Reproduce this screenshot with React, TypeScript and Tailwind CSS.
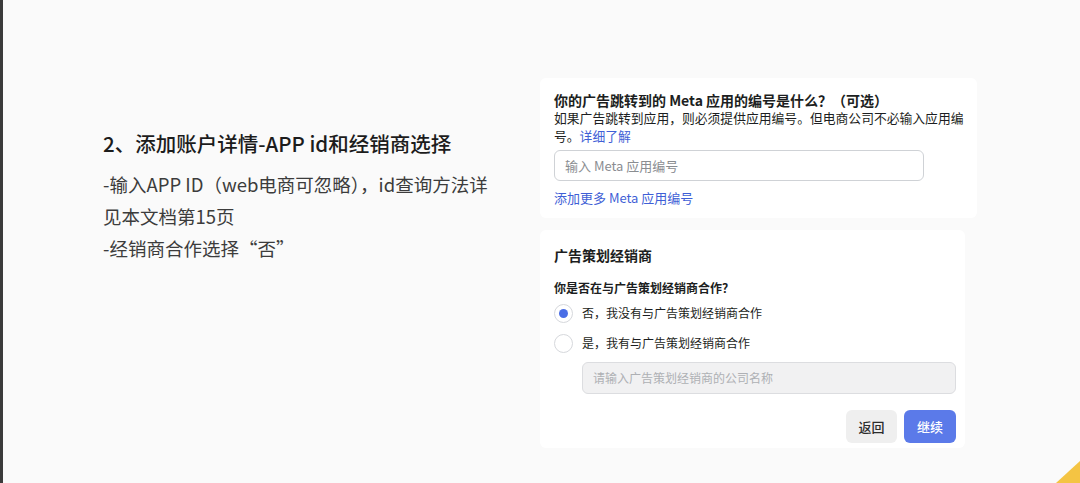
import React from "react";

export default function App() {
  return (
    <div className="relative flex h-[483px] w-[1080px] overflow-hidden border-l-[3px] border-[#3b3b3b] bg-[#fafafa] font-['Noto_Sans_CJK_SC','Noto_Sans',sans-serif]">
      {/* left description */}
      <div className="w-[537px] shrink-0 pl-[100px] pt-[130px]">
        <div className="whitespace-nowrap text-[20.5px] font-medium leading-[26px] text-[#1c1c1c]">
          2、添加账户详情-APP id和经销商选择
        </div>
        <div className="mt-[12px] whitespace-nowrap text-[18.5px] leading-[32px] text-[#3c3c3c]">
          <div>-输入APP ID（web电商可忽略），id查询方法详</div>
          <div>见本文档第15页</div>
          <div>-经销商合作选择“否”</div>
        </div>
      </div>

      {/* right form cards */}
      <div className="flex flex-col gap-[12px] pt-[78px]">
        <div className="h-[140px] w-[437px] rounded-md bg-white pl-[14px] pt-[13px]">
          <div className="whitespace-nowrap text-[14px] font-bold leading-[18px] text-[#1c1e21]">
            你的广告跳转到的 Meta 应用的编号是什么？（可选）
          </div>
          <div className="whitespace-nowrap text-[12.8px] leading-[18px] text-[#1c1e21]">
            <div>如果广告跳转到应用，则必须提供应用编号。但电商公司不必输入应用编</div>
            <div>
              号。<span className="text-[#3f5fd6]">详细了解</span>
            </div>
          </div>
          <div className="mt-[5px] flex h-[31px] w-[370px] items-center rounded-[6px] border border-[#cfd2d6] bg-white px-[10px] text-[13px] text-[#8a8d91]">
            输入 Meta 应用编号
          </div>
          <div className="mt-[8px] text-[13px] leading-[18px] text-[#3f5fd6]">
            添加更多 Meta 应用编号
          </div>
        </div>

        <div className="h-[218px] w-[425px] rounded-md bg-white pl-[14px] pr-[9px] pt-[15px]">
          <div className="text-[14px] font-bold leading-[20px] text-[#1c1e21]">广告策划经销商</div>
          <div className="mt-[14px] text-[12px] font-semibold leading-[18px] text-[#1c1e21]">
            你是否在与广告策划经销商合作？
          </div>
          <div className="mt-[5px] flex h-[22px] items-center gap-[9px]">
            <div className="flex h-[19px] w-[19px] items-center justify-center rounded-full border border-[#d6d8dc] bg-white">
              <div className="h-[9px] w-[9px] rounded-full bg-[#4a6ee6]" />
            </div>
            <span className="text-[12px] text-[#1c1e21]">否，我没有与广告策划经销商合作</span>
          </div>
          <div className="mt-[8px] flex h-[22px] items-center gap-[9px]">
            <div className="h-[19px] w-[19px] rounded-full border border-[#d6d8dc] bg-white" />
            <span className="text-[12px] text-[#1c1e21]">是，我有与广告策划经销商合作</span>
          </div>
          <div className="ml-[28px] mt-[8px] flex h-[32px] w-[374px] items-center rounded-[6px] border border-[#dcdde0] bg-[#f1f1f2] px-[10px] text-[12px] text-[#aeb0b4]">
            请输入广告策划经销商的公司名称
          </div>
          <div className="mt-[16px] flex justify-end gap-[7px]">
            <div className="flex h-[33px] w-[51px] items-center justify-center rounded-[6px] bg-[#efefef] text-[13px] font-medium text-[#2c2c2c]">
              返回
            </div>
            <div className="flex h-[33px] w-[52px] items-center justify-center rounded-[6px] bg-[#5b7ae9] text-[13px] font-medium text-white">
              继续
            </div>
          </div>
        </div>
      </div>

      {/* yellow corner */}
      <svg className="absolute bottom-0 right-0" width="24" height="22" viewBox="0 0 24 22">
        <polygon points="0,22 24,22 24,0" fill="#f4c443" />
      </svg>
    </div>
  );
}
